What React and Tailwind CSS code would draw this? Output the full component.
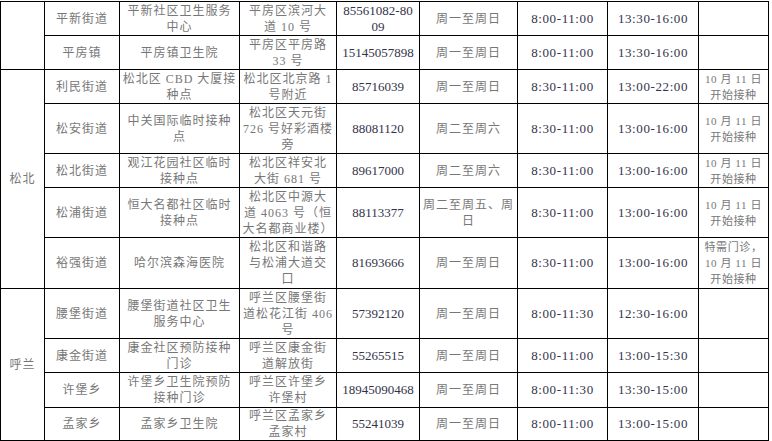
const rows = [
  { group: '', span: 2, h: 'h-[34px]', street: '平新街道', site: ['平新社区卫生服务', '中心'], addr: ['平房区滨河大', '道 10 号'], tel: ['85561082-80', '09'], days: ['周一至周日'], am: '8:00-11:00', pm: '13:30-16:00', note: [] },
  { h: 'h-[34px]', street: '平房镇', site: ['平房镇卫生院'], addr: ['平房区平房路', '33 号'], tel: ['15145057898'], days: ['周一至周日'], am: '8:00-11:00', pm: '13:30-16:00', note: [] },
  { group: '松北', span: 5, h: 'h-[34px]', street: '利民街道', site: ['松北区 CBD 大厦接', '种点'], addr: ['松北区北京路 1', '号附近'], tel: ['85716039'], days: ['周一至周日'], am: '8:30-11:00', pm: '13:00-22:00', note: ['10 月 11 日', '开始接种'] },
  { h: 'h-[50px]', street: '松安街道', site: ['中关国际临时接种', '点'], addr: ['松北区天元街', '726 号好彩酒楼', '旁'], tel: ['88081120'], days: ['周二至周六'], am: '8:30-11:00', pm: '13:00-16:00', note: ['10 月 11 日', '开始接种'] },
  { h: 'h-[34px]', street: '松北街道', site: ['观江花园社区临时', '接种点'], addr: ['松北区祥安北', '大街 681 号'], tel: ['89617000'], days: ['周二至周六'], am: '8:30-11:00', pm: '13:00-16:00', note: ['10 月 11 日', '开始接种'] },
  { h: 'h-[50px]', street: '松浦街道', site: ['恒大名都社区临时', '接种点'], addr: ['松北区中源大', '道 4063 号（恒', '大名都商业楼）'], tel: ['88113377'], days: ['周二至周五、周', '日'], am: '8:30-11:00', pm: '13:00-16:00', note: ['10 月 11 日', '开始接种'] },
  { h: 'h-[51px]', street: '裕强街道', site: ['哈尔滨森海医院'], addr: ['松北区和谐路', '与松浦大道交', '口'], tel: ['81693666'], days: ['周一至周日'], am: '8:30-11:00', pm: '13:00-16:00', note: ['特需门诊，', '10 月 11 日', '开始接种'] },
  { group: '呼兰', span: 4, h: 'h-[50px]', street: '腰堡街道', site: ['腰堡街道社区卫生', '服务中心'], addr: ['呼兰区腰堡街', '道松花江街 406', '号'], tel: ['57392120'], days: ['周一至周日'], am: '8:00-11:30', pm: '12:30-16:00', note: [] },
  { h: 'h-[34px]', street: '康金街道', site: ['康金社区预防接种', '门诊'], addr: ['呼兰区康金街', '道解放街'], tel: ['55265515'], days: ['周一至周日'], am: '8:00-11:00', pm: '13:00-15:30', note: [] },
  { h: 'h-[35px]', street: '许堡乡', site: ['许堡乡卫生院预防', '接种门诊'], addr: ['呼兰区许堡乡', '许堡村'], tel: ['18945090468'], days: ['周一至周日'], am: '8:00-11:30', pm: '13:30-15:00', note: [] },
  { h: 'h-[32px]', street: '孟家乡', site: ['孟家乡卫生院'], addr: ['呼兰区孟家乡', '孟家村'], tel: ['55241039'], days: ['周一至周日'], am: '8:00-11:00', pm: '13:00-15:00', note: [] },
];

const Lines = ({ lines }) =>
  lines.map((l, i) => (
    <div key={i} className="h-[16px] leading-[16px]">{l}</div>
  ));

const td = 'border border-black p-0 text-center align-middle whitespace-nowrap leading-[16px] overflow-hidden';
const cn = 'text-[12px] tracking-[1px] text-[#777]';
const num = 'text-[13px] text-[#33334a]';

export default function App() {
  return (
    <div className="w-[772px] h-[441px] bg-white pt-px overflow-hidden font-['Liberation_Serif','Noto_Sans_CJK_SC',serif]">
      <table className="table-fixed border-collapse w-[769px]">
        <colgroup>
          <col className="w-[44px]" />
          <col className="w-[75px]" />
          <col className="w-[120px]" />
          <col className="w-[97px]" />
          <col className="w-[83px]" />
          <col className="w-[98px]" />
          <col className="w-[90px]" />
          <col className="w-[91px]" />
          <col className="w-[70px]" />
        </colgroup>
        <tbody>
          {rows.map((r, i) => (
            <tr key={i} className={r.h}>
              {r.span && <td rowSpan={r.span} className={`${td} ${cn}`}><Lines lines={r.group ? [r.group] : []} /></td>}
              <td className={`${td} ${cn}`}><Lines lines={[r.street]} /></td>
              <td className={`${td} ${cn}`}><Lines lines={r.site} /></td>
              <td className={`${td} ${cn}`}><Lines lines={r.addr} /></td>
              <td className={`${td} ${num}`}><Lines lines={r.tel} /></td>
              <td className={`${td} ${cn}`}><Lines lines={r.days} /></td>
              <td className={`${td} ${num} tracking-[0.6px]`}><Lines lines={[r.am]} /></td>
              <td className={`${td} ${num} tracking-[0.6px]`}><Lines lines={[r.pm]} /></td>
              <td className={`${td} text-[11px] tracking-[0.6px] text-[#777]`}><Lines lines={r.note} /></td>
            </tr>
          ))}
        </tbody>
      </table>
    </div>
  );
}
